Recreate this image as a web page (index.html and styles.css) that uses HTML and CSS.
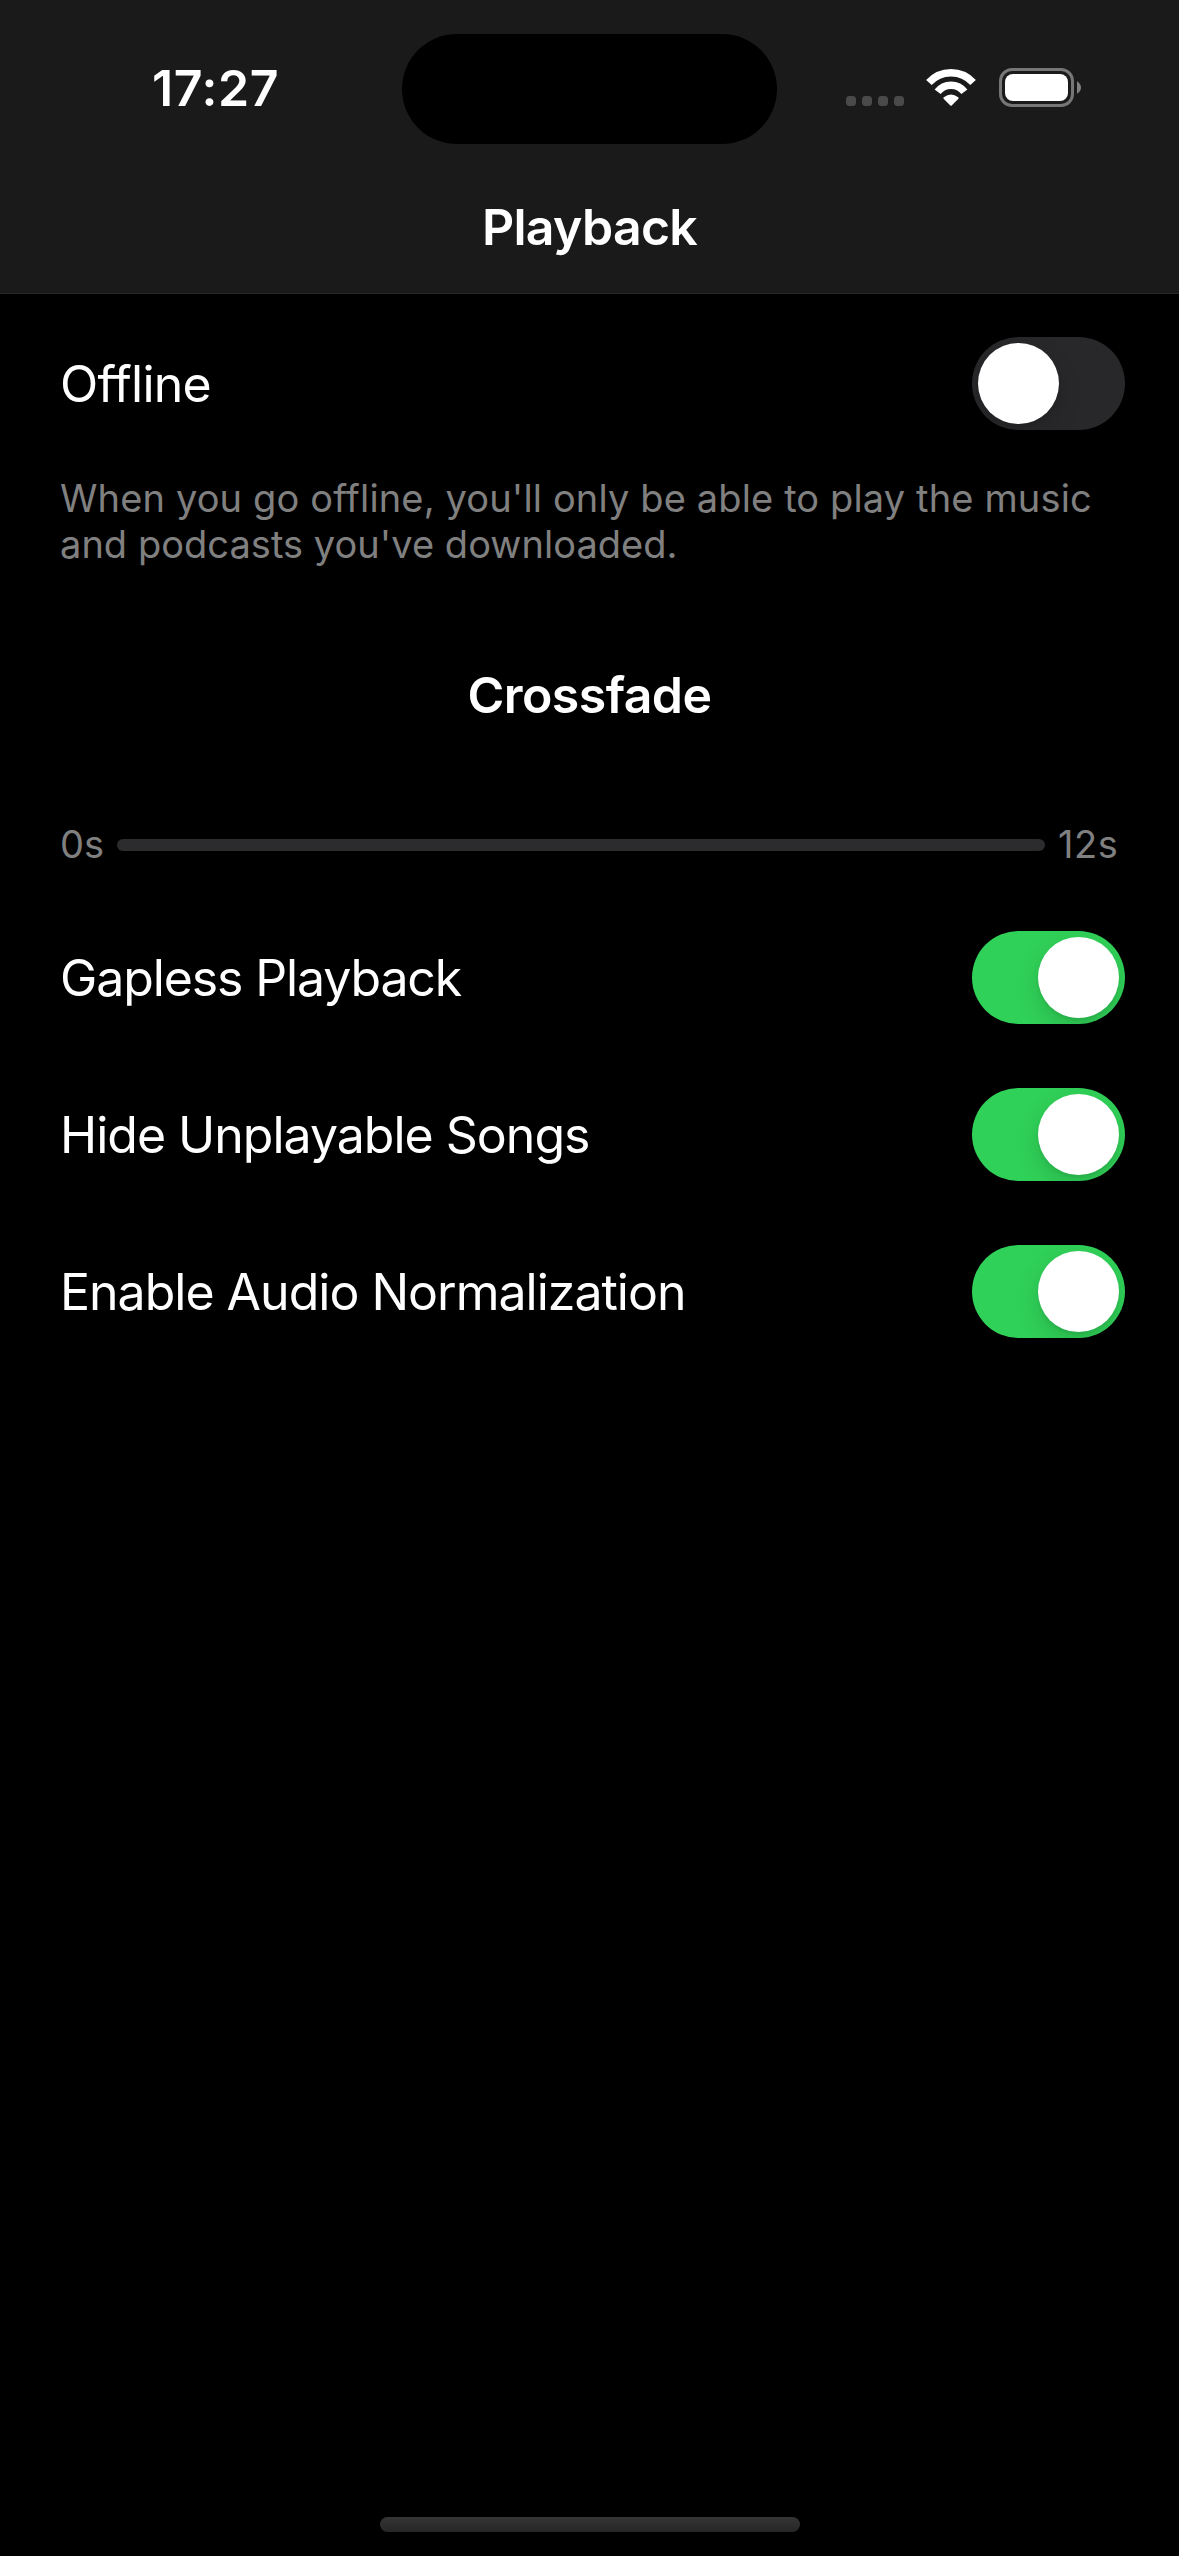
FILE: index.html
```html
<!DOCTYPE html>
<html lang="en">
<head>
<meta charset="utf-8">
<title>Playback</title>
<link rel="stylesheet" href="styles.css">
</head>
<body>
<div class="screen">
  <header class="header">
    <div class="status-bar">
      <span class="time">17:27</span>
      <div class="island"></div>
      <div class="status-icons">
        <svg class="signal" width="58" height="10" viewBox="0 0 58 10"><rect width="10" height="10" rx="3.5"/><rect x="16" width="10" height="10" rx="3.5"/><rect x="32" width="10" height="10" rx="3.5"/><rect x="48" width="10" height="10" rx="3.5"/></svg>
        <svg class="wifi" width="50" height="38" viewBox="0 0 50 38"><g fill="none" stroke="#fff" stroke-width="7.5"><path d="M2.9 13.5A29.7 29.7 0 0 1 47.1 13.5"/><path d="M11.6 22.8A16.9 16.9 0 0 1 38.4 22.8"/></g><path fill="#fff" d="M17.6 29.8Q17 29 17.8 28.3Q25 22.6 32.2 28.3Q33 29 32.4 29.8L25.7 36.5Q25 37.1 24.3 36.5Z"/></svg>
        <svg class="battery" width="83" height="39" viewBox="0 0 83 39"><rect x="1.5" y="1.5" width="72" height="36" rx="11.5" fill="none" stroke="#767676" stroke-width="3"/><rect x="6" y="6" width="63" height="27" rx="8" fill="#fff"/><path fill="#808080" d="M78 13.2C80.4 14.6 82 16.8 82 19.5S80.4 24.4 78 25.8Z"/></svg>
      </div>
    </div>
    <h1 class="title">Playback</h1>
  </header>
  <main class="settings">
    <div class="row"><span class="label offline">Offline</span><span class="switch"></span></div>
    <p class="hint">When you go offline, you'll only be able to play the music<br><span class="hint-end">and podcasts you've downloaded.</span></p>
    <h2 class="section">Crossfade</h2>
    <div class="slider"><span class="value">0s</span><div class="track"></div><span class="value max">12s</span></div>
    <div class="row"><span class="label gapless">Gapless Playback</span><span class="switch on"></span></div>
    <div class="row"><span class="label">Hide Unplayable Songs</span><span class="switch on"></span></div>
    <div class="row"><span class="label">Enable Audio Normalization</span><span class="switch on"></span></div>
  </main>
  <div class="home-indicator"></div>
</div>
</body>
</html>
```
FILE: styles.css
```css
* { box-sizing: border-box; margin: 0; padding: 0; }
body { background: #000; color: #fff; font-family: Inter, "Liberation Sans", sans-serif; }
.screen { width: 1179px; height: 2556px; display: flex; flex-direction: column; background: #000; }
.header { height: 294px; background: #1a1a1a; border-bottom: 1px solid #262626; }
.status-bar { height: 177px; display: grid; grid-template-columns: 402px 375px 402px; }
.time { margin: 58px 0 0 152px; font-size: 50px; line-height: 60px; font-weight: 600; letter-spacing: .6px; }
.island { height: 110px; margin-top: 34px; border-radius: 55px; background: #000; }
.status-icons { display: flex; align-items: flex-start; padding: 68px 0 0 69px; }
.signal { margin-top: 28px; fill: #4a4a4a; }
.wifi { margin: 1px 0 0 22px; overflow: visible; }
.battery { margin-left: 23px; }
.title { padding-top: 20px; text-align: center; font-size: 50px; line-height: 60px; font-weight: 600; letter-spacing: -.7px; }
.settings { flex: 1; padding: 11px 54px 0 60px; }
.row { height: 157px; display: flex; align-items: center; justify-content: space-between; }
.label { font-size: 50px; line-height: 60px; letter-spacing: -1px; }
.label.offline { letter-spacing: -.75px; }
.label.gapless { letter-spacing: -1.12px; }
.switch { width: 153px; height: 93px; padding: 6px; display: flex; border-radius: 47px; background: #28282a; }
.switch::before { content: ""; width: 81px; height: 81px; border-radius: 50%; background: #fff; box-shadow: 0 9px 24px rgba(0, 0, 0, .15), 0 3px 3px rgba(0, 0, 0, .06); }
.switch.on { justify-content: flex-end; background: #30d158; }
.hint { margin-top: 13px; font-size: 38px; line-height: 46px; letter-spacing: .14px; color: #808080; }
.hint-end { letter-spacing: .04px; }
.section { margin: 98px 6px 0 0; text-align: center; font-size: 50px; line-height: 60px; font-weight: 600; letter-spacing: -.55px; }
.slider { height: 54px; margin-top: 93px; margin-bottom: 27px; display: grid; grid-template-columns: 57px 928px 80px; align-items: center; }
.value { padding-bottom: 2px; font-size: 38px; line-height: 46px; color: #808080; }
.value.max { padding-left: 13px; letter-spacing: .5px; }
.track { height: 12px; border-radius: 6px; background: #2c2c2e; }
.home-indicator { width: 420px; height: 15px; margin: 0 auto 24px; border-radius: 8px; background: linear-gradient(#353535, #262626); }
```
